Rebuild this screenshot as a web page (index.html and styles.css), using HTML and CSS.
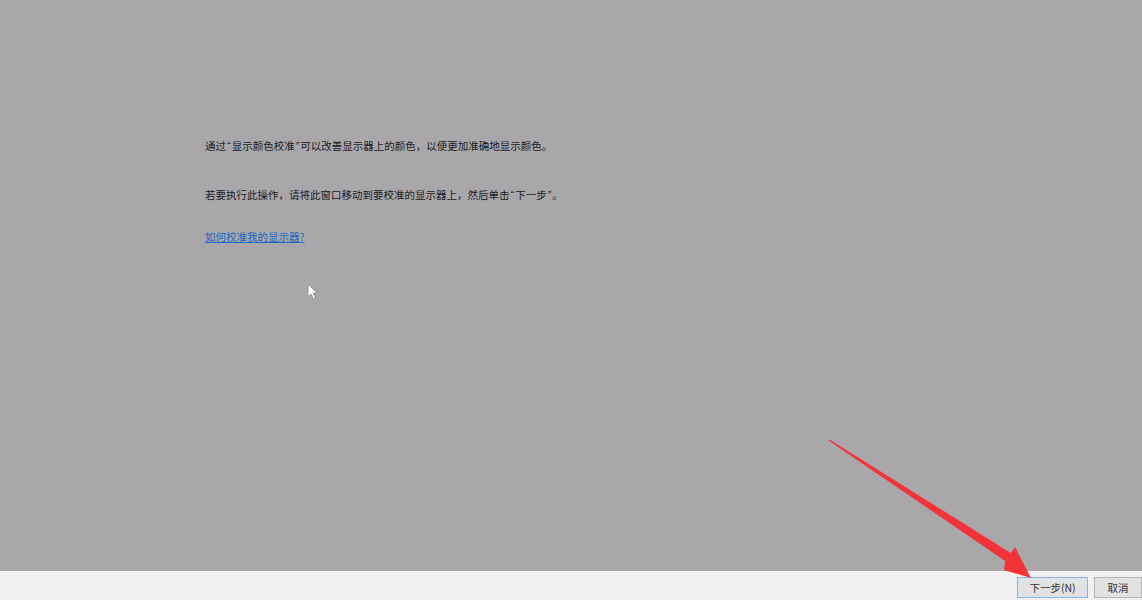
FILE: index.html
```html
<!DOCTYPE html>
<html lang="zh-CN">
<head>
<meta charset="utf-8">
<link rel="stylesheet" href="styles.css">
</head>
<body>
<div class="window">
  <main class="content">
    <p class="line first">通过<span class="q">“</span>显示颜色校准<span class="q">”</span>可以改善显示器上的颜色，以便更加准确地显示颜色。</p>
    <p class="line second">若要执行此操作，请将此窗口移动到要校准的显示器上，然后单击<span class="q">“</span>下一步<span class="q">”</span>。</p>
    <a class="link" href="#">如何校准我的显示器?</a>
  </main>
  <footer class="bar">
    <button class="btn primary">下一步(N)</button>
    <button class="btn">取消</button>
  </footer>
  <svg class="cursor" width="12" height="18" viewBox="0 0 12 18"><path d="M1 1 L1 14 L4 11 L6.5 16 L8.5 15 L6 10 L10 10 Z" fill="#fff" stroke="#888" stroke-width="0.8"/></svg>
  <svg class="arrow" width="1142" height="600" viewBox="0 0 1142 600"><polygon points="828.5,440.5 1005.2,561 1004,570 1031,578 1015,547 1010.8,553 829.5,439.5" fill="#f2343a"/></svg>
</div>
</body>
</html>
```
FILE: styles.css
```css
html, body {
  margin: 0;
  padding: 0;
}
body {
  width: 1142px;
  height: 600px;
  overflow: hidden;
  font-family: "Noto Sans CJK SC", sans-serif;
  font-size: 10.5px;
  color: #1a1a1a;
}
.window {
  position: relative;
  width: 1142px;
  height: 600px;
  display: flex;
  flex-direction: column;
  background: #a9a7aa;
}
.content {
  flex: 1;
  display: flex;
  flex-direction: column;
  align-items: flex-start;
  padding: 138px 0 0 205px;
}
.line {
  margin: 0;
  line-height: 16px;
}
.q {
  font-family: "Liberation Sans", sans-serif;
  font-size: 11px;
  padding: 0 1px;
}
.second {
  margin-top: 33px;
}
.link {
  margin-top: 26px;
  color: #1a67c4;
  text-decoration: underline;
  line-height: 16px;
}
.bar {
  height: 29px;
  background: #f0f0f0;
  display: flex;
  align-items: flex-start;
  justify-content: flex-end;
  gap: 6px;
  padding-top: 6px;
  box-sizing: border-box;
}
.btn {
  font-family: inherit;
  font-size: 10.5px;
  color: #333;
  height: 21px;
  padding: 0;
  background: #e2e2e2;
  border: 1px solid #b5b5b5;
  line-height: 19px;
  width: 48px;
}
.btn.primary {
  width: 71px;
  border-color: #8fb4d8;
  box-shadow: inset 0 0 0 1px #d5e3f0;
}
.cursor {
  position: absolute;
  left: 307px;
  top: 283px;
}
.arrow {
  position: absolute;
  left: 0;
  top: 0;
  pointer-events: none;
}
```
